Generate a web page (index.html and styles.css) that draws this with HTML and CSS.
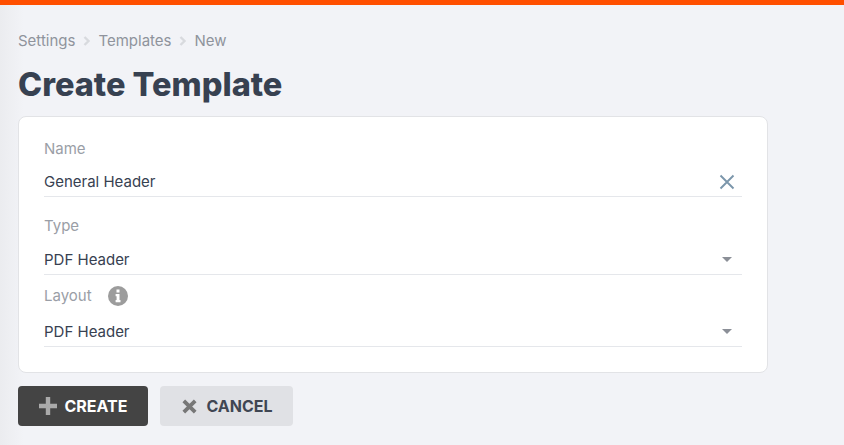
FILE: index.html
```html
<!DOCTYPE html>
<html lang="en">
<head>
<meta charset="utf-8">
<title>Create Template</title>
<link rel="stylesheet" href="styles.css">
</head>
<body>
<div class="topbar"></div>
<main class="page">
  <nav class="crumbs">
    <span>Settings</span>
    <svg class="chev" width="8" height="10" viewBox="0 0 8 10"><path d="M1.5 1l4 4-4 4" fill="none" stroke="#d8dade" stroke-width="2.4"/></svg>
    <span>Templates</span>
    <svg class="chev" width="8" height="10" viewBox="0 0 8 10"><path d="M1.5 1l4 4-4 4" fill="none" stroke="#d8dade" stroke-width="2.4"/></svg>
    <span>New</span>
  </nav>
  <h1 class="title">Create Template</h1>
  <section class="card">
    <div class="field field-name">
      <div class="label">Name</div>
      <div class="control">
        <span>General Header</span>
        <svg class="clear" width="16" height="16" viewBox="0 0 16 16"><path d="M1.5 1.5l13 13M14.5 1.5l-13 13" fill="none" stroke="#7b96ab" stroke-width="1.9"/></svg>
      </div>
    </div>
    <div class="field field-type">
      <div class="label">Type</div>
      <div class="control">
        <span>PDF Header</span>
        <svg class="caret" width="10" height="5" viewBox="0 0 10 5"><path d="M0 0h10L5 5z" fill="#8b8f97"/></svg>
      </div>
    </div>
    <div class="field field-layout">
      <div class="label label-info">Layout
        <svg class="info" width="20" height="20" viewBox="0 0 20 20"><circle cx="10" cy="10" r="10" fill="#9c9c9c"/><path d="M8.5 3.6h3v2.8h-3zM7.6 8h3.9v6h1v2.2H7.6V14h1v-3.8h-1z" fill="#fff"/></svg>
      </div>
      <div class="control">
        <span>PDF Header</span>
        <svg class="caret" width="10" height="5" viewBox="0 0 10 5"><path d="M0 0h10L5 5z" fill="#8b8f97"/></svg>
      </div>
    </div>
  </section>
  <div class="actions">
    <button class="btn btn-primary" type="button">
      <svg width="18" height="18" viewBox="0 0 18 18"><path d="M9 0v18M0 9h18" fill="none" stroke="#aaa" stroke-width="4.4"/></svg>
      CREATE
    </button>
    <button class="btn btn-secondary" type="button">
      <svg width="15" height="15" viewBox="0 0 15 15"><path d="M1.8 1.8l11.4 11.4M13.2 1.8L1.8 13.2" fill="none" stroke="#777" stroke-width="3.8"/></svg>
      CANCEL
    </button>
  </div>
</main>
</body>
</html>
```

FILE: styles.css
```css
* { box-sizing: border-box; }
html, body { margin: 0; height: 100%; }
body {
  background: linear-gradient(90deg, #ebecef 0, #f2f3f7 24px);
  font-family: Inter, "Liberation Sans", sans-serif;
  overflow: hidden;
}
.topbar { height: 5px; background: #ff4f00; }
.page { padding: 0 0 0 18px; width: 768px; }
.crumbs {
  display: flex;
  align-items: center;
  gap: 6.5px;
  height: 20px;
  margin-top: 26px;
  font-size: 15px;
  line-height: 20px;
  color: #8f939c;
}
.chev { margin: 0 1px; }
.title {
  margin: 9px 0 0;
  font-size: 32.5px;
  line-height: 50px;
  font-weight: 800;
  color: #374151;
}
.card {
  height: 257px;
  margin-top: 6px;
  padding: 0 25px;
  background: #fff;
  border: 1px solid #e2e3e6;
  border-radius: 8px;
}
.label {
  font-size: 15px;
  line-height: 20px;
  color: #9a9ea6;
}
.label-info { display: flex; align-items: center; gap: 16px; }
.control {
  display: flex;
  justify-content: space-between;
  align-items: center;
  height: 30px;
  border-bottom: 1px solid #e5e7eb;
  font-size: 15px;
  color: #374151;
}
.field-name { padding-top: 22px; }
.field-name .control { margin-top: 8px; }
.field-type { padding-top: 19px; }
.field-type .control { margin-top: 9px; }
.field-layout { padding-top: 11px; }
.field-layout .control { margin-top: 11px; }
.clear { margin-right: 7px; }
.caret { margin-right: 10px; }
.actions { display: flex; gap: 12px; margin-top: 13px; }
.btn {
  display: flex;
  align-items: center;
  justify-content: center;
  height: 40px;
  border: 0;
  border-radius: 4px;
  font-family: inherit;
  font-size: 16px;
  font-weight: 700;
  gap: 8px;
  padding: 0;
}
.btn-primary { width: 130px; background: #444; color: #fff; }
.btn-secondary { width: 133px; background: #e0e1e5; color: #3f4653; gap: 9px; padding-left: 2px; }
```
